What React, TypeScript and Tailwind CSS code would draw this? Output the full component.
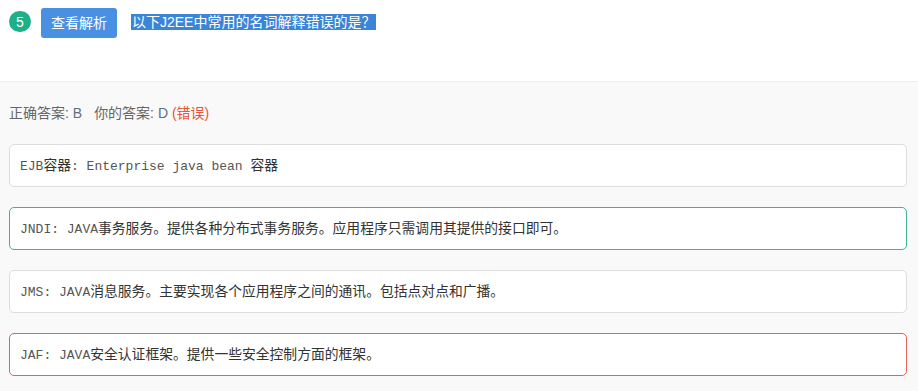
import React from 'react'

const options = [
  { id: 'A', text: 'EJB容器: Enterprise java bean 容器', state: 'normal' },
  { id: 'B', text: 'JNDI: JAVA事务服务。提供各种分布式事务服务。应用程序只需调用其提供的接口即可。', state: 'right' },
  { id: 'C', text: 'JMS: JAVA消息服务。主要实现各个应用程序之间的通讯。包括点对点和广播。', state: 'normal' },
  { id: 'D', text: 'JAF: JAVA安全认证框架。提供一些安全控制方面的框架。', state: 'wrong' },
]

// 中文字符比等宽英文略大
function MixedText({ text }: { text: string }) {
  const parts = text.split(/([\u3000-\u303f\u4e00-\u9fff\uff00-\uffef]+)/).filter(Boolean)
  return (
    <>
      {parts.map((p, i) =>
        /[\u3000-\u303f\u4e00-\u9fff\uff00-\uffef]/.test(p) ? (
          <span key={i} className="text-[13.8px] font-['Noto_Sans_CJK_SC',sans-serif] text-[#333333]">
            {p}
          </span>
        ) : (
          <span key={i} className="whitespace-pre">{p}</span>
        )
      )}
    </>
  )
}

export default function App() {
  return (
    <div className="w-[918px] h-[391px] bg-[#f9f9f9] font-['Liberation_Sans','Noto_Sans_CJK_SC',sans-serif] overflow-hidden">
      {/* 题目头部 */}
      <div className="h-[82px] bg-white border-b border-[#eeeeee] flex items-start pl-[9px] pt-[8px]">
        <div className="mt-[3px] w-[22px] h-[21px] rounded-full bg-[#1fb08a] text-white text-[14px] leading-none flex items-center justify-center">
          5
        </div>
        <button className="ml-[10px] h-[30px] px-[10px] bg-[#4a90e2] rounded-[3px] text-white text-[14px] leading-none">
          查看解析
        </button>
        <span className="ml-[14px] mt-[6px] bg-[#3b84d6] text-white text-[14px] leading-[16px] px-[1px]">
          以下J2EE中常用的名词解释错误的是？
        </span>
      </div>

      {/* 答案 */}
      <div className="pl-[9px] pt-[21px] text-[14px] leading-[20px] text-[#666666]">
        正确答案: <span className="text-[#5f6f80]">B</span>
        <span className="ml-[12px]">你的答案: </span>
        <span className="text-[#5f6f80]">D</span> <span className="text-[#e6553a]">(错误)</span>
      </div>

      {/* 选项 */}
      <div className="mt-[21px] pl-[9px] pr-[11px] flex flex-col gap-[20px]">
        {options.map((o) => (
          <div
            key={o.id}
            className={`h-[43px] bg-white rounded-[5px] border flex items-center px-[10px] text-[13px] text-[#555555] font-['Liberation_Mono','Noto_Sans_CJK_SC',monospace] ${
              o.state === 'right'
                ? 'border-[#3fb393]'
                : o.state === 'wrong'
                ? 'border-[#e0645c]'
                : 'border-[#dddddd]'
            }`}
          >
            <div>
              <MixedText text={o.text} />
            </div>
          </div>
        ))}
      </div>
    </div>
  )
}
